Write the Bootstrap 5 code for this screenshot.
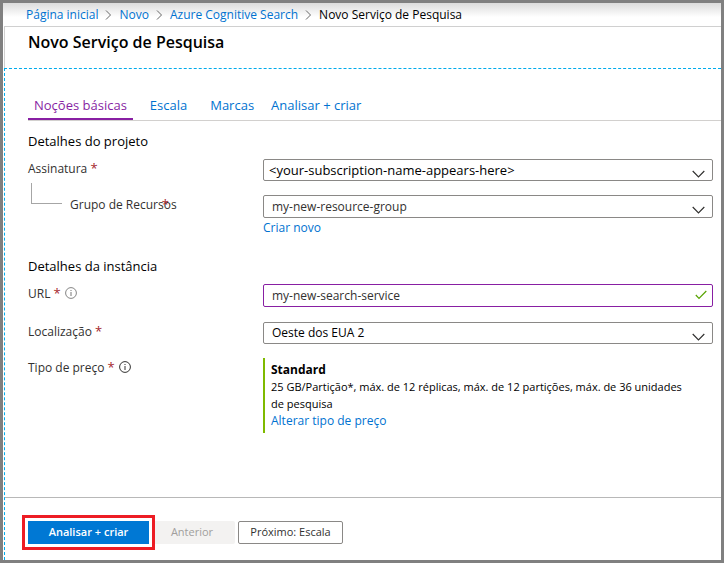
<!DOCTYPE html>
<html lang="pt">
<head>
<meta charset="utf-8">
<meta name="viewport" content="width=device-width, initial-scale=1">
<title>Novo Serviço de Pesquisa</title>
<link href="https://cdn.jsdelivr.net/npm/bootstrap@5.3.0/dist/css/bootstrap.min.css" rel="stylesheet">
<style>
body { font-family: "Open Sans", "Noto Sans", sans-serif; font-size: 12px; line-height: 16px; color: #323130; background: #fff; }
a { color: #0072d0; text-decoration: none; }
.frame { border: 3px solid #808080; min-height: 100vh; }
.crumbs { height: 23px; padding-left: 23px; background: linear-gradient(#dcdcdc, #fff 14px); color: #000; gap: 7px; }
.crumbs .sep { width: 7px; height: 10px; }
.page-head { height: 42px; margin-left: 1px; padding: 3px 0 0 23px; border-top: 1px solid #d0d0d0; border-left: 1px solid #d0d0d0; }
.page-head h1 { font-size: 16px; line-height: 24px; font-weight: 600; color: #000; }
.blade { margin-left: 1px; border: 1px dashed #00abec; border-width: 1px 0 0 1px; }
.tabs { margin-left: 23px; padding-top: 25px; border-bottom: 1px solid #d2d0ce; }
.tabs .nav-link { padding: 2px 6px 4px; height: 26px; line-height: 18px; color: #0072d0; border-radius: 0; font-size: 13px; margin-left: 11px; }
.tabs .nav-link.active { color: #881fa3; border-bottom: 2px solid #881fa3; margin-left: 0; padding: 2px 6px; }
.tabs .nav-link:last-child { margin-left: 5px; }
.main-form { padding: 11px 8px 0 23px; }
.main-form h2 { margin-bottom: 9px; font-size: 13px; line-height: 18px; font-weight: 500; color: #000; }
.field { display: grid; grid-template-columns: 235px minmax(0, 1fr); margin-bottom: 14px; }
.field > label, .field > .label-cell { padding-top: 1px; }
.req { color: #a4262c; font-size: 13px; }
.group-label { margin-left: 8px; }
.group-label .req { margin-left: -15px; }
.branch { width: 31px; height: 21px; margin: -13px 0 0 3px; border: 1px solid #a6a6a6; border-width: 0 0 1px 1px; }
.new-link { margin-top: 2px; }
.group-row { margin-bottom: 21px; }
.url-row { margin-bottom: 15px; }
.main-form .form-control, .main-form .form-select { height: 22px; min-height: 0; padding: 0 30px 0 8px; font-size: 12px; line-height: 16px; color: #323130; border: 1px solid #8a8886; border-radius: 2px; }
.main-form .form-select { background-position: right 7px top 10px; background-size: 13px 8px; background-image: url("data:image/svg+xml,%3Csvg xmlns='http://www.w3.org/2000/svg' viewBox='0 0 13 8'%3E%3Cpath d='M.7 1l5.8 5.8L12.3 1' fill='none' stroke='%23323130' stroke-width='1.2'/%3E%3C/svg%3E"); }
.main-form .wide-text { font-size: 13px; padding-left: 5px; color: #000; }
.main-form .tall { height: 23px; }
.main-form .url-input { border-color: #881fa3; }
.info { width: 12px; height: 12px; margin-top: 2px; }
.check { right: 6px; top: 6px; width: 12px; height: 10px; }
.tier { border-left: 2px solid #7fba00; padding: 3px 0 4px 6px; line-height: 17px; color: #000; }
.tier-text { font-size: 11px; }
.actions { padding: 23px 0 16px 23px; border-top: 1px solid #b8b8b8; }
.actions .btn { height: 23px; padding: 0 0 2px; font-size: 11px; line-height: 16px; border-radius: 2px; }
.actions .go { width: 121px; font-weight: 600; background: #0078d4; color: #fff; border: 0; border-radius: 0; outline: 3px solid #ed1c24; outline-offset: 3px; box-shadow: 0 0 0 3px #fff; z-index: 1; }
.actions .prev { width: 86px; background: #f3f2f1; color: #a19f9d; border: 0; opacity: 1; }
.actions .next { width: 105px; margin-left: 3px; border: 1px solid #8a8886; color: #323130; }
</style>
</head>
<body>
<div class="frame d-flex flex-column">
  <nav class="crumbs d-flex align-items-center" aria-label="Trilha">
    <a href="#">Página inicial</a>
    <svg class="sep" viewBox="0 0 7 10"><path d="M1 .5 5.5 5 1 9.5" fill="none" stroke="#666"/></svg>
    <a href="#">Novo</a>
    <svg class="sep" viewBox="0 0 7 10"><path d="M1 .5 5.5 5 1 9.5" fill="none" stroke="#666"/></svg>
    <a href="#">Azure Cognitive Search</a>
    <svg class="sep" viewBox="0 0 7 10"><path d="M1 .5 5.5 5 1 9.5" fill="none" stroke="#666"/></svg>
    <span>Novo Serviço de Pesquisa</span>
  </nav>
  <header class="page-head"><h1 class="m-0">Novo Serviço de Pesquisa</h1></header>
  <div class="blade flex-grow-1 d-flex flex-column">
    <nav class="tabs nav" aria-label="Etapas">
      <a class="nav-link active" href="#">Noções básicas</a>
      <a class="nav-link" href="#">Escala</a>
      <a class="nav-link" href="#">Marcas</a>
      <a class="nav-link" href="#">Analisar + criar</a>
    </nav>
    <form class="main-form flex-grow-1">
      <h2>Detalhes do projeto</h2>
      <div class="field">
        <label for="sub">Assinatura <span class="req">*</span></label>
        <select id="sub" class="form-select wide-text"><option>&lt;your-subscription-name-appears-here&gt;</option></select>
      </div>
      <div class="field group-row">
        <div class="label-cell d-flex align-items-start"><span class="branch"></span><label class="group-label text-nowrap" for="rg">Grupo de Recursos<span class="req">*</span></label></div>
        <div>
          <select id="rg" class="form-select tall"><option>my-new-resource-group</option></select>
          <div class="new-link"><a href="#">Criar novo</a></div>
        </div>
      </div>
      <h2>Detalhes da instância</h2>
      <div class="field url-row">
        <div class="label-cell d-flex align-items-start gap-1"><label for="url">URL <span class="req">*</span></label>
          <svg viewBox="0 0 12 12" class="info"><circle cx="6" cy="6" r="5.4" fill="none" stroke="#777" stroke-width=".9"/><path d="M6 5v4M6 3v1" stroke="#777"/></svg></div>
        <div class="position-relative">
          <input id="url" class="form-control tall url-input" value="my-new-search-service">
          <svg class="check position-absolute" viewBox="0 0 12 10"><path d="M.8 5 4 8.3 11.3 1" fill="none" stroke="#57a300" stroke-width="1.2"/></svg>
        </div>
      </div>
      <div class="field">
        <label for="loc">Localização <span class="req">*</span></label>
        <select id="loc" class="form-select text-black"><option>Oeste dos EUA 2</option></select>
      </div>
      <div class="field">
        <div class="label-cell d-flex align-items-start gap-1"><span>Tipo de preço <span class="req">*</span></span>
          <svg viewBox="0 0 12 12" class="info"><circle cx="6" cy="6" r="5.4" fill="none" stroke="#323130"/><path d="M6 5v4M6 3v1" stroke="#323130"/></svg></div>
        <div class="tier">
          <div class="fw-bold">Standard</div>
          <div class="tier-text">25 GB/Partição*, máx. de 12 réplicas, máx. de 12 partições, máx. de 36 unidades de&nbsp;pesquisa</div>
          <a href="#">Alterar tipo de preço</a>
        </div>
      </div>
    </form>
    <footer class="actions d-flex">
      <button type="button" class="btn go position-relative">Analisar + criar</button>
      <button type="button" class="btn prev" disabled>Anterior</button>
      <button type="button" class="btn next">Próximo: Escala</button>
    </footer>
  </div>
</div>
<script src="https://cdn.jsdelivr.net/npm/bootstrap@5.3.0/dist/js/bootstrap.bundle.min.js"></script>
</body>
</html>
